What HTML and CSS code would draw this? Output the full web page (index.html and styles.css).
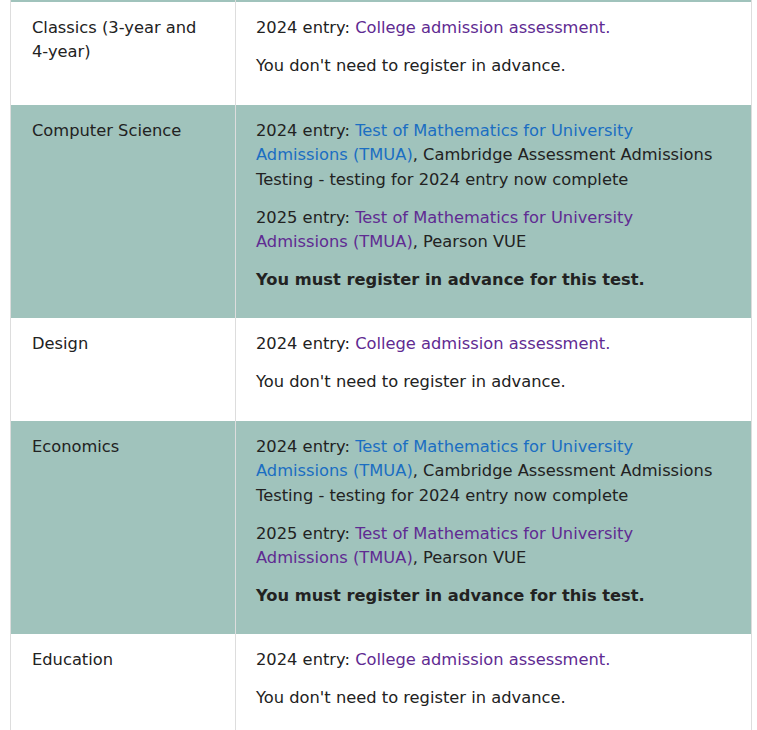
FILE: index.html
```html
<!DOCTYPE html>
<html lang="en">
<head>
<meta charset="utf-8">
<title>Admissions tests</title>
<link rel="stylesheet" href="styles.css">
</head>
<body>
<table class="tests">
  <colgroup>
    <col class="col-subject">
    <col class="col-detail">
  </colgroup>
  <tbody>
    <tr class="shaded strip"><td></td><td></td></tr>
    <tr>
      <td class="subject">Classics (3-year and 4-year)</td>
      <td class="detail">
        <p>2024 entry: <a class="visited" href="#">College admission assessment.</a></p>
        <p>You don't need to register in advance.</p>
      </td>
    </tr>
    <tr class="shaded">
      <td class="subject">Computer Science</td>
      <td class="detail">
        <p>2024 entry: <a class="link" href="#">Test of Mathematics for University Admissions (TMUA)</a>, Cambridge Assessment Admissions Testing - testing for 2024 entry now complete</p>
        <p>2025 entry: <a class="visited" href="#">Test of Mathematics for University Admissions (TMUA)</a>, Pearson VUE</p>
        <p><strong>You must register in advance for this test.</strong></p>
      </td>
    </tr>
    <tr>
      <td class="subject">Design</td>
      <td class="detail">
        <p>2024 entry: <a class="visited" href="#">College admission assessment.</a></p>
        <p>You don't need to register in advance.</p>
      </td>
    </tr>
    <tr class="shaded">
      <td class="subject">Economics</td>
      <td class="detail">
        <p>2024 entry: <a class="link" href="#">Test of Mathematics for University Admissions (TMUA)</a>, Cambridge Assessment Admissions Testing - testing for 2024 entry now complete</p>
        <p>2025 entry: <a class="visited" href="#">Test of Mathematics for University Admissions (TMUA)</a>, Pearson VUE</p>
        <p><strong>You must register in advance for this test.</strong></p>
      </td>
    </tr>
    <tr>
      <td class="subject">Education</td>
      <td class="detail">
        <p>2024 entry: <a class="visited" href="#">College admission assessment.</a></p>
        <p>You don't need to register in advance.</p>
      </td>
    </tr>
  </tbody>
</table>
</body>
</html>
```

FILE: styles.css
```css
html, body {
  margin: 0;
  padding: 0;
  background: #ffffff;
}
body {
  padding: 0 6px 0 10px;
  font-family: "DejaVu Sans", Verdana, sans-serif;
  font-size: 16.3px;
  line-height: 24.45px;
  color: #222222;
}
.tests {
  width: 741px;
  border-collapse: collapse;
  table-layout: fixed;
}
.col-subject {
  width: 225px;
}
.col-detail {
  width: 516px;
}
.tests td {
  vertical-align: top;
  border-left: 1px solid #dddddd;
  border-right: 1px solid #dddddd;
  padding: 14px 20px 0 21px;
}
.tests td.detail {
  padding-left: 20px;
  padding-right: 30px;
}
.tests tr {
  height: 103px;
}
.tests tr.shaded {
  background: #a0c3bc;
  height: 213px;
}
.tests tr.strip {
  height: 2px;
}
.tests tr.strip td {
  padding: 0;
  height: 2px;
}
.detail p {
  margin: 0 0 13.5px 0;
}
.detail strong {
  font-weight: bold;
  color: #222222;
}
a {
  text-decoration: none;
}
a.link {
  color: #1b6ec2;
}
a.visited {
  color: #5f2b92;
}
```
